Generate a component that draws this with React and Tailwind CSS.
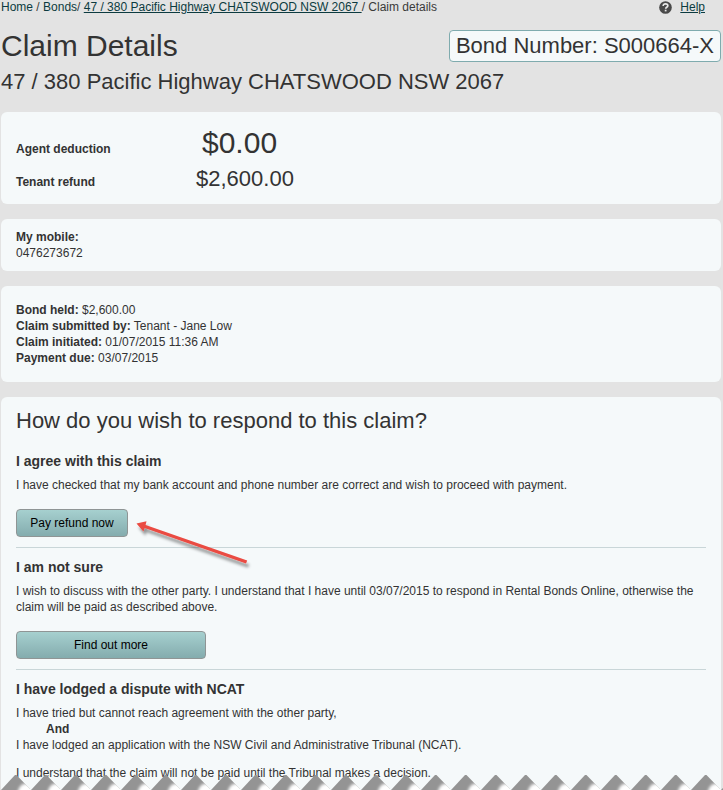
import React from "react";

const claim = {
  address: "47 / 380 Pacific Highway CHATSWOOD NSW 2067",
  bondNumber: "S000664-X",
  mobile: "0476273672",
};

const details = [
  { label: "Bond held:", value: "$2,600.00" },
  { label: "Claim submitted by:", value: "Tenant - Jane Low" },
  { label: "Claim initiated:", value: "01/07/2015 11:36 AM" },
  { label: "Payment due:", value: "03/07/2015" },
];

const Panel = ({ className = "", children }) => (
  <section className={`bg-[#f5f9fa] px-[15px] ${className}`}>
    {children}
  </section>
);

const ActionButton = ({ className = "", children }) => (
  <button
    type="button"
    className={`mt-4 block h-7 rounded border border-[#8f9595] bg-linear-to-b from-[#a6d0cf] to-[#84acae] text-center text-black ${className}`}
  >
    {children}
  </button>
);

const HelpIcon = () => (
  <svg viewBox="0 0 14 14" className="h-[13px] w-[13px]" aria-hidden="true">
    <circle cx="7" cy="7" r="6.8" fill="#4a4a4a" />
    <path
      d="M4.5 5.300c0-1.300 1-2.200 2.500-2.200s2.500.8 2.500 2.100c0 1.700-2.300 1.500-2.300 3.200"
      fill="none"
      stroke="#e9e9e9"
      strokeWidth="1.8"
    />
    <rect x="6.200" y="9.400" width="1.900" height="1.800" fill="#e9e9e9" />
  </svg>
);

const Arrow = () => (
  <svg
    viewBox="0 0 120 64"
    className="pointer-events-none absolute left-full top-0 ml-2 h-16 w-[120px] max-w-none"
    aria-hidden="true"
  >
    <defs>
      <filter id="arrow-shadow" x="-10%" y="-20%" width="125%" height="150%">
        <feDropShadow dx="2" dy="4" stdDeviation="1.6" floodColor="#000" floodOpacity="0.4" />
      </filter>
    </defs>
    <g filter="url(#arrow-shadow)" fill="#ea4b42">
      <path d="M0.500 14.500 10.500 12.200 9.600 16 111.200 51.500 110 54.400 8.600 18.900 7.400 22.500Z" />
    </g>
  </svg>
);

// torn paper edge along the bottom of the page
const TornEdge = () => (
  <svg className="pointer-events-none absolute inset-x-0 bottom-0 h-4 w-full" aria-hidden="true">
    <defs>
      <filter id="tooth-blur" x="-50%" y="-50%" width="200%" height="200%">
        <feGaussianBlur stdDeviation="1.6" />
      </filter>
      <clipPath id="tooth-clip">
        <path d="M1 16 15 1h1.500L30 15v1Z" />
      </clipPath>
      <pattern id="tooth" width="30" height="16" patternUnits="userSpaceOnUse">
        <g clipPath="url(#tooth-clip)">
          <rect width="30" height="16" fill="#949494" />
          <path d="M16.500 22 19 14 22 10.500 26 9.500 36 9.500V22Z" fill="#fff" filter="url(#tooth-blur)" />
        </g>
      </pattern>
    </defs>
    <rect width="100%" height="16" fill="url(#tooth)" />
  </svg>
);

const App = () => {
  return (
    <div className="relative min-h-screen overflow-hidden bg-[#e3e3e3] pl-px pr-0.5 font-['Liberation_Sans',Arial,sans-serif] text-xs leading-4 text-[#333]">
      <header>
        <div className="flex items-start justify-between pr-4 text-[#3a3a3a]">
          <nav aria-label="Breadcrumb" className="-mt-px">
            <a href="#home" className="text-[#0c3b40]">Home</a> /{" "}
            <a href="#bonds" className="text-[#0c3b40]">Bonds</a>/{" "}
            <a href="#bond" className="whitespace-pre text-[#0c3b40] underline">
              {claim.address + " "}
            </a>
            / Claim details
          </nav>
          <div className="-mt-px flex items-center gap-2">
            <HelpIcon />
            <a href="#help" className="text-[#0c3b40] underline">Help</a>
          </div>
        </div>

        <div className="mt-[15px] flex items-start justify-between">
          <h1 className="text-[30px] leading-8">Claim Details</h1>
          <div className="rounded border border-[#7fabae] bg-[#f5f9fa] px-1.5 text-[22px] leading-[30px]">
            Bond Number: {claim.bondNumber}
          </div>
        </div>
        <h2 className="mt-1.5 text-[22px] leading-7">{claim.address}</h2>
      </header>

      <main className="mt-4 flex flex-col gap-[15px]">
        <Panel className="rounded-md pb-[7px] pt-[13px]">
          <dl className="grid grid-cols-[180px_1fr] items-baseline">
            <dt className="font-bold">Agent deduction</dt>
            <dd className="pl-1.5 text-[30px] leading-9">$0.00</dd>
            <dt className="font-bold">Tenant refund</dt>
            <dd className="text-[22px] leading-9">$2,600.00</dd>
          </dl>
        </Panel>

        <Panel className="rounded-md py-2.5">
          <p className="font-bold">My mobile:</p>
          <p>{claim.mobile}</p>
        </Panel>

        <Panel className="rounded-md py-4">
          {details.map((d) => (
            <p key={d.label}>
              <b>{d.label}</b> {d.value}
            </p>
          ))}
        </Panel>

        <Panel className="rounded-t-md pb-[9px] pt-2.5">
          <h2 className="text-[22px] leading-7">How do you wish to respond to this claim?</h2>

          <div className="mt-4 border-b border-[#c9d6d8] pb-2.5">
            <h3 className="text-sm font-bold leading-5">I agree with this claim</h3>
            <p className="mt-1.5">
              I have checked that my bank account and phone number are correct and wish to
              proceed with payment.
            </p>
            <div className="relative w-fit">
              <ActionButton className="w-28">Pay refund now</ActionButton>
              <Arrow />
            </div>
          </div>

          <div className="mt-[9px] border-b border-[#c9d6d8] pb-2.5">
            <h3 className="text-sm font-bold leading-5">I am not sure</h3>
            <p className="mt-1.5">
              I wish to discuss with the other party. I understand that I have until 03/07/2015
              to respond in Rental Bonds Online, otherwise the claim will be paid as described
              above.
            </p>
            <ActionButton className="w-[190px]">Find out more</ActionButton>
          </div>

          <div className="mt-[9px]">
            <h3 className="text-sm font-bold leading-5">I have lodged a dispute with NCAT</h3>
            <p className="mt-1.5">I have tried but cannot reach agreement with the other party,</p>
            <p className="pl-[30px] font-bold">And</p>
            <p>
              I have lodged an application with the NSW Civil and Administrative Tribunal (NCAT).
            </p>
            <p className="mt-3">
              I understand that the claim will not be paid until the Tribunal makes a decision.
            </p>
          </div>
        </Panel>
      </main>

      <TornEdge />
    </div>
  );
};

export default App;
